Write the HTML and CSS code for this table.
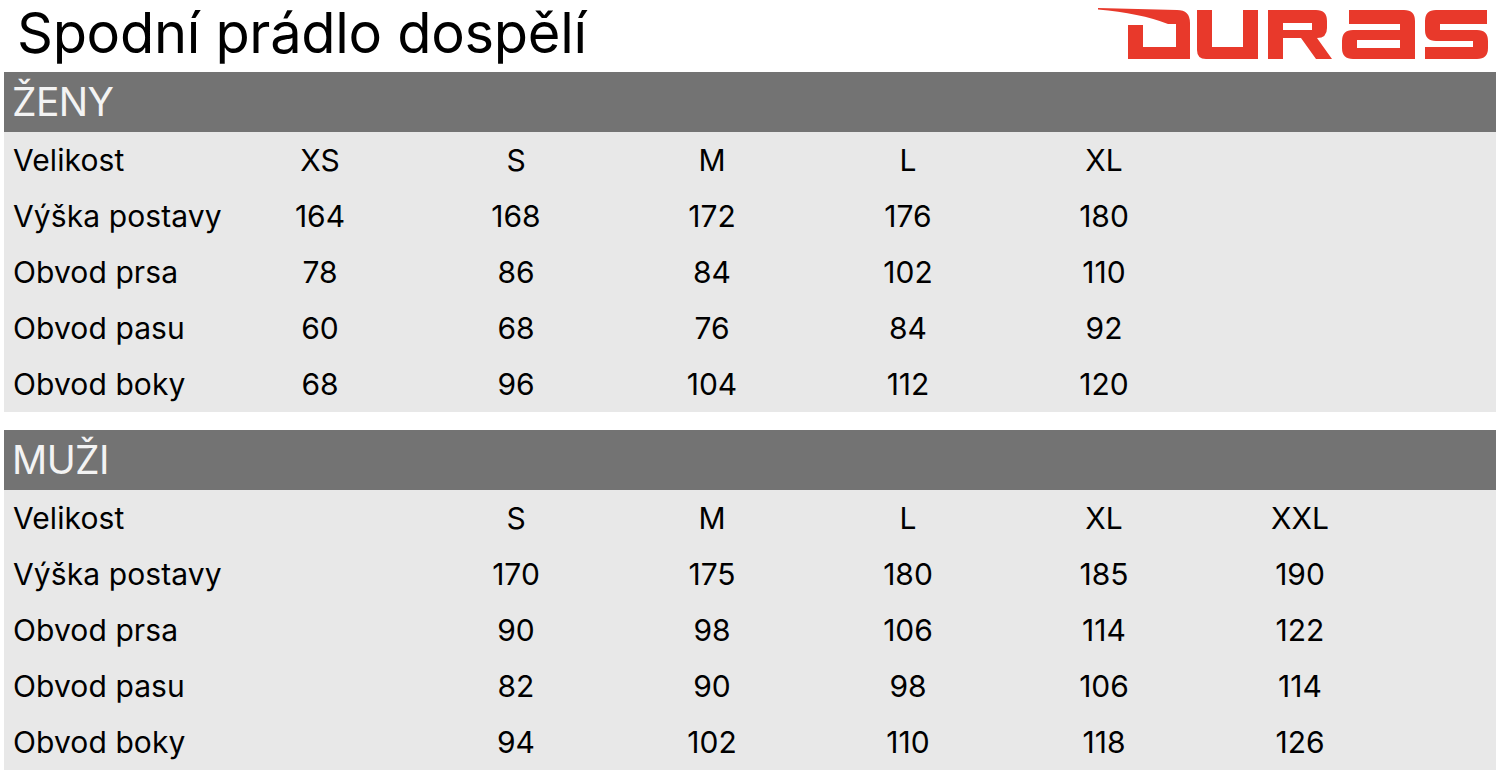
FILE: index.html
```html
<!DOCTYPE html>
<html lang="cs">
<head>
<meta charset="utf-8">
<title>Spodní prádlo dospělí</title>
<link rel="stylesheet" href="styles.css">
</head>
<body>
<div class="page">
  <header class="top">
    <h1 class="title">Spodní prádlo dospělí</h1>
    <svg class="logo" viewBox="1090 4 404 62" width="404" height="62" aria-label="DURAS">
      <g fill="#e8392b" fill-rule="evenodd">
        <path d="M1098,8 L1177,10 Q1190,10 1190,23 L1190,59 L1128,59 L1128,25 L1143,25 L1143,47 L1176,47 L1176,24 L1168,24 Q1140,13 1098,9.5 Z"/>
        <path d="M1197,10 L1212,10 L1212,47 L1243,47 L1243,10 L1258,10 L1258,59 L1206,59 Q1197,59 1197,50 Z"/>
        <path d="M1268,10 L1316,10 Q1327,10 1327,21 L1327,28 Q1327,38 1317,38 L1332,59 L1316,59 L1301,38 L1283,38 L1283,59 L1268,59 Z M1283,23 L1312,23 L1312,30 L1283,30 Z"/>
        <path d="M1349,10 L1404,10 Q1415,10 1415,21 L1415,59 L1353,59 Q1342,59 1342,48 L1342,41 Q1342,30 1353,30 L1400,30 L1400,24 L1349,24 Z M1357,40 L1400,40 L1400,48 L1357,48 Z"/>
        <path d="M1436,10 L1487,10 L1487,24 L1440,24 L1440,30 L1477,30 Q1488,30 1488,41 L1488,48 Q1488,59 1477,59 L1425,59 L1425,47 L1473,47 L1473,41 L1436,41 Q1425,41 1425,30 L1425,21 Q1425,10 1436,10 Z"/>
      </g>
    </svg>
  </header>

  <section class="group">
    <div class="bar">ŽENY</div>
    <div class="table">
      <div class="row"><span class="label">Velikost</span><span>XS</span><span>S</span><span>M</span><span>L</span><span>XL</span><span></span></div>
      <div class="row"><span class="label">Výška postavy</span><span>164</span><span>168</span><span>172</span><span>176</span><span>180</span><span></span></div>
      <div class="row"><span class="label">Obvod prsa</span><span>78</span><span>86</span><span>84</span><span>102</span><span>110</span><span></span></div>
      <div class="row"><span class="label">Obvod pasu</span><span>60</span><span>68</span><span>76</span><span>84</span><span>92</span><span></span></div>
      <div class="row"><span class="label">Obvod boky</span><span>68</span><span>96</span><span>104</span><span>112</span><span>120</span><span></span></div>
    </div>
  </section>

  <section class="group">
    <div class="bar">MUŽI</div>
    <div class="table">
      <div class="row"><span class="label">Velikost</span><span></span><span>S</span><span>M</span><span>L</span><span>XL</span><span>XXL</span></div>
      <div class="row"><span class="label">Výška postavy</span><span></span><span>170</span><span>175</span><span>180</span><span>185</span><span>190</span></div>
      <div class="row"><span class="label">Obvod prsa</span><span></span><span>90</span><span>98</span><span>106</span><span>114</span><span>122</span></div>
      <div class="row"><span class="label">Obvod pasu</span><span></span><span>82</span><span>90</span><span>98</span><span>106</span><span>114</span></div>
      <div class="row"><span class="label">Obvod boky</span><span></span><span>94</span><span>102</span><span>110</span><span>118</span><span>126</span></div>
    </div>
  </section>
</div>
</body>
</html>
```

FILE: styles.css
```css
* { box-sizing: border-box; }

html, body {
  margin: 0;
  padding: 0;
  background: #ffffff;
}

body {
  font-family: Inter, "Noto Sans", "Liberation Sans", sans-serif;
  color: #000000;
}

.page {
  width: 1496px;
  height: 774px;
  overflow: hidden;
}

.top {
  height: 72px;
  display: flex;
  align-items: center;
  justify-content: space-between;
  padding-left: 17px;
  padding-right: 2px;
}

.title {
  margin: 0;
  font-weight: 400;
  font-size: 56px;
  line-height: 72px;
  letter-spacing: -0.3px;
  margin-top: -7px;
}

.logo {
  display: block;
  margin-top: -2px;
}

.group {
  margin-left: 4px;
  margin-bottom: 18px;
}

.bar {
  height: 60px;
  background: #737373;
  color: #f3f3f3;
  font-size: 39px;
  line-height: 60px;
  padding-left: 8px;
  letter-spacing: -0.6px;
}

.table {
  background: #e8e8e8;
}

.row {
  display: grid;
  grid-template-columns: 218px repeat(6, 196px) 1fr;
  height: 56px;
  align-items: center;
  font-size: 30px;
}

.row span {
  text-align: center;
}

.row .label {
  text-align: left;
  padding-left: 9px;
  letter-spacing: 0.1px;
}
```
